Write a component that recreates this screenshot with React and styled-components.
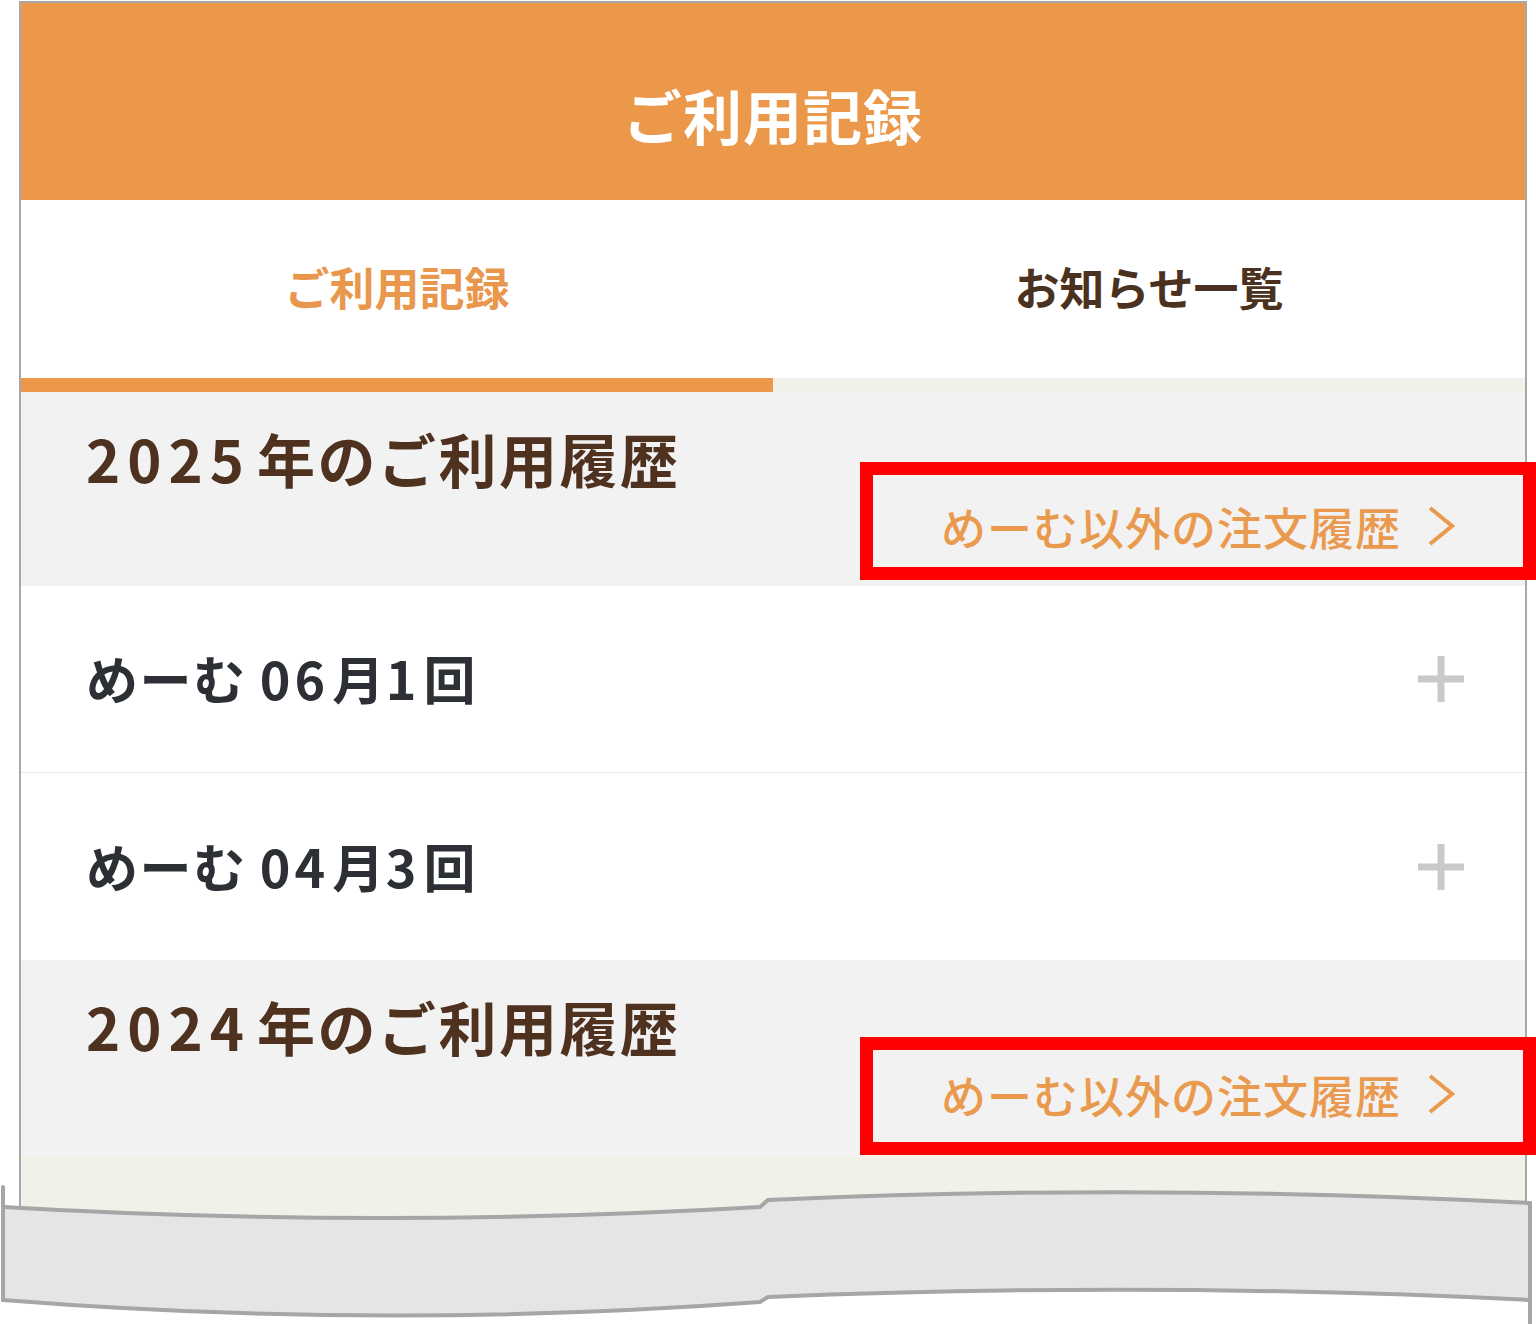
import React from "react";
import styled, { createGlobalStyle } from "styled-components";

const Global = createGlobalStyle`
  html, body { margin: 0; padding: 0; background: #ffffff; }
  body { font-family: "Noto Sans CJK JP", "Noto Sans", sans-serif; }
`;

const Page = styled.div`
  position: relative;
  width: 1536px;
  height: 1324px;
  overflow: hidden;
  background: #ffffff;
`;

const Frame = styled.div`
  margin: 1px 0 0 19px;
  width: 1504px;
  border: 2px solid #a8a8a8;
  border-bottom: none;
  display: flex;
  flex-direction: column;
`;

const Header = styled.header`
  height: 197px;
  background: #ec984a;
  display: flex;
  align-items: center;
  justify-content: center;
  color: #ffffff;
  font-size: 59px;
  font-weight: 700;
  letter-spacing: 1px;
  padding-top: 26px;
  box-sizing: border-box;
`;

const Tabs = styled.nav`
  display: grid;
  grid-template-columns: 1fr 1fr;
  background: #ffffff;
`;

const Tab = styled.div`
  height: 192px;
  box-sizing: border-box;
  display: flex;
  align-items: center;
  justify-content: center;
  padding-bottom: 6px;
  font-size: 45px;
  font-weight: 700;
  color: ${(p) => (p.$active ? "#e9974d" : "#4b3220")};
  border-bottom: 14px solid ${(p) => (p.$active ? "#ec984a" : "#f1f0e9")};
`;

const YearSection = styled.section`
  background: #f2f2f2;
  display: flex;
  flex-direction: column;
  padding: 31px 70px 28px 65px;
  height: ${(p) => p.$h}px;
  box-sizing: border-box;
`;

const YearTitle = styled.h2`
  margin: 0;
  font-size: 58px;
  line-height: 70px;
  font-weight: 700;
  color: #4e321f;
  letter-spacing: 2.5px;
`;

const Num = styled.span`
  letter-spacing: ${(p) => p.$ls ?? 6}px;
  margin-right: ${(p) => p.$mr ?? 4}px;
`;

const LinkRow = styled.div`
  display: flex;
  justify-content: flex-end;
  margin-top: 3px;
`;

const OtherLink = styled.a`
  position: relative;
  display: flex;
  align-items: center;
  gap: 26px;
  height: 60px;
  font-size: 45px;
  font-weight: 500;
  color: #ea9a4f;
  text-decoration: none;
  letter-spacing: 1px;
`;

const Highlight = styled.span`
  position: absolute;
  top: ${(p) => p.$top}px;
  bottom: ${(p) => p.$bottom}px;
  left: -81px;
  right: -81px;
  border: 13px solid #ff0000;
  pointer-events: none;
`;

const Row = styled.div`
  height: ${(p) => p.$h}px;
  box-sizing: border-box;
  display: flex;
  align-items: center;
  justify-content: space-between;
  padding: 0 60px 0 65px;
  background: #ffffff;
  border-bottom: ${(p) => (p.$divider ? "1px solid #e6e6e6" : "none")};
`;

const RowLabel = styled.span`
  font-size: 52px;
  font-weight: 700;
  color: #2c3034;
  letter-spacing: 1.5px;
  margin-top: -3px;
`;

const Filler = styled.div`
  height: 120px;
  background: #f1f0e9;
`;

const Torn = styled.svg`
  position: absolute;
  left: 0;
  top: 1180px;
  width: 1536px;
  height: 144px;
`;

const Plus = () => (
  <svg width="48" height="48" viewBox="0 0 48 48">
    <path d="M24 1 V47 M1 24 H47" stroke="#c9c9c9" strokeWidth="7" fill="none" />
  </svg>
);

const Chevron = () => (
  <svg width="28" height="42" viewBox="0 0 28 42">
    <path d="M3 3 L25 21 L3 39" stroke="#ea9a4f" strokeWidth="4" fill="none" strokeLinejoin="miter" />
  </svg>
);

function Year({ year, h, boxTop, boxBottom }) {
  return (
    <YearSection $h={h}>
      <YearTitle>
        <Num $ls={7} $mr={6}>{year}</Num>年のご利用履歴
      </YearTitle>
      <LinkRow>
        <OtherLink href="#">
          めーむ以外の注文履歴
          <Chevron />
          <Highlight $top={boxTop} $bottom={boxBottom} />
        </OtherLink>
      </LinkRow>
    </YearSection>
  );
}

export default function App() {
  return (
    <Page>
      <Global />
      <Frame>
        <Header>ご利用記録</Header>
        <Tabs>
          <Tab $active>ご利用記録</Tab>
          <Tab>お知らせ一覧</Tab>
        </Tabs>
        <Year year="2025" h={194} boxTop={-34} boxBottom={-24} />
        <Row $h={187} $divider>
          <RowLabel>
            めーむ <Num $ls={4} $mr={3}>06</Num>月<Num $ls={4} $mr={3}>1</Num>回
          </RowLabel>
          <Plus />
        </Row>
        <Row $h={187}>
          <RowLabel>
            めーむ <Num $ls={4} $mr={3}>04</Num>月<Num $ls={4} $mr={3}>3</Num>回
          </RowLabel>
          <Plus />
        </Row>
        <Year year="2024" h={196} boxTop={-27} boxBottom={-31} />
        <Filler />
      </Frame>
      <Torn viewBox="0 0 1536 144">
        <path
          d="M3 27 Q380 49 760 27 L768 20 Q1149 3 1530 23 L1530 120 Q1149 101 768 117 L760 122 Q380 150 3 120 Z"
          fill="#e5e5e5"
        />
        <g stroke="#a6a6a6" strokeWidth="4" fill="none" strokeLinecap="round">
          <path d="M3 27 Q380 49 760 27 L768 20 Q1149 3 1530 23" />
          <path d="M3 120 Q380 150 760 122 L768 117 Q1149 101 1530 120" />
          <path d="M3 7 V120" />
          <path d="M1530 23 V144" />
        </g>
      </Torn>
    </Page>
  );
}
